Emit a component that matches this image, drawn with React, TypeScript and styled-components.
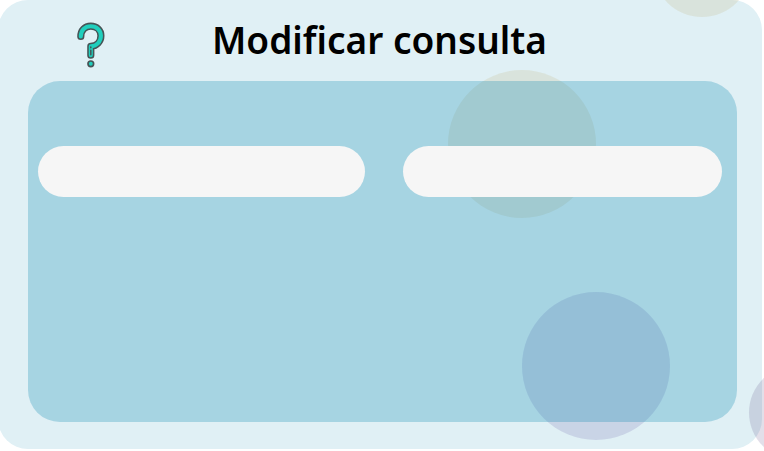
import React from "react";
import styled, { createGlobalStyle } from "styled-components";

const GlobalStyle = createGlobalStyle`
  * { box-sizing: border-box; }
  html, body { margin: 0; background: #fff; overflow: hidden; }
`;

const Page = styled.div`
  position: relative;
  width: 764px;
  height: 451px;
  overflow: hidden;
`;

const Card = styled.main`
  display: flex;
  flex-direction: column;
  width: 764px;
  height: 449px;
  margin-left: -2px;
  padding: 0 25px 27px 30px;
  border-radius: 30px;
  background: #e0f0f5;
`;

const Header = styled.header`
  display: flex;
  flex: 0 0 81px;
  align-items: flex-start;
  padding: 20px 0 0 46px;
`;

const HelpIcon = styled.svg`
  flex: none;
  width: 32px;
  height: 50px;
`;

const Title = styled.h1`
  margin: -7px 0 0 106px;
  font: 600 37px/54px "Noto Sans", "Open Sans", sans-serif;
  font-variant-ligatures: none;
  color: #000;
  white-space: nowrap;
`;

const Panel = styled.section`
  position: relative;
  z-index: 2;
  display: flex;
  flex: 1;
  align-items: flex-start;
  gap: 38px;
  padding: 65px 15px 0 10px;
  border-radius: 32px;
  background: rgba(1, 133, 173, 0.26);
`;

const Field = styled.input<{ $width: number }>`
  width: ${({ $width }) => $width}px;
  height: 51px;
  padding: 0 24px;
  border: 0;
  border-radius: 26px;
  outline: 0;
  background: #f6f6f6;
  font: 16px "Noto Sans", sans-serif;
`;

const Bubble = styled.div<{ $x: number; $y: number; $size: number; $color: string }>`
  position: absolute;
  z-index: 1;
  left: ${({ $x }) => $x}px;
  top: ${({ $y }) => $y}px;
  width: ${({ $size }) => $size}px;
  height: ${({ $size }) => $size}px;
  border-radius: 50%;
  background: ${({ $color }) => $color};
  pointer-events: none;
`;

const sand = "rgba(176, 139, 38, 0.12)";
const violet = "rgba(86, 78, 160, 0.17)";
const mauve = "rgba(82, 68, 122, 0.17)";

function QuestionMark() {
  return (
    <HelpIcon viewBox="0 0 32 50" fill="none" strokeLinecap="round" strokeLinejoin="round" aria-label="Ayuda">
      <path d="M6.8 16.5C6.8 10.2 10.9 6.2 16.8 6.2C22.6 6.2 26.9 10.2 26.9 15.8C26.9 21.5 22.8 26 16.8 26.4V35.2" stroke="#465456" strokeWidth="7.2" />
      <path d="M6.8 16.5C6.8 10.2 10.9 6.2 16.8 6.2C22.6 6.2 26.9 10.2 26.9 15.8C26.9 21.5 22.8 26 16.8 26.4V35.2" stroke="#20cfbd" strokeWidth="4.1" />
      <path d="M16.8 27V27.8M16.8 30.2V34.8" stroke="#465456" strokeWidth="1.5" />
      <circle cx="16.8" cy="43.8" r="2.8" fill="#20cfbd" stroke="#465456" strokeWidth="1.7" />
    </HelpIcon>
  );
}

export default function App() {
  return (
    <Page>
      <GlobalStyle />
      <Card>
        <Header>
          <QuestionMark />
          <Title>Modificar consulta</Title>
        </Header>
        <Panel>
          <Field $width={327} aria-label="Consulta" />
          <Field $width={319} aria-label="Nuevo valor" />
        </Panel>
      </Card>
      <Bubble $x={653} $y={-81} $size={98} $color={sand} />
      <Bubble $x={448} $y={69.5} $size={148} $color={sand} />
      <Bubble $x={522} $y={291.5} $size={148} $color={violet} />
      <Bubble $x={749} $y={365} $size={95} $color={mauve} />
    </Page>
  );
}
